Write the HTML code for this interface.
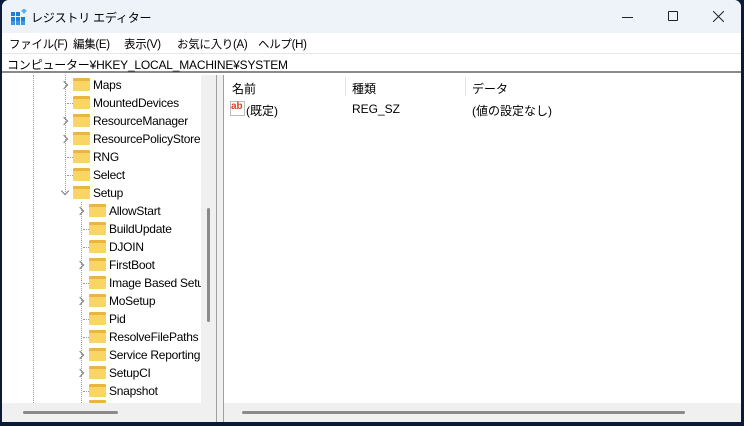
<!DOCTYPE html>
<html><head><meta charset="utf-8"><style>
*{margin:0;padding:0;box-sizing:border-box}
body{width:744px;height:426px;overflow:hidden;background:#0c1a3a;font-family:"Liberation Sans","Noto Sans CJK JP",sans-serif;font-size:12px;color:#000;position:relative}
.win{position:absolute;left:2px;top:0;width:739px;height:422px;background:#fff;border-radius:7px 7px 0 0;overflow:hidden}
.title{position:absolute;left:0;top:0;width:100%;height:33px;background:#eef3f9}
.menu{position:absolute;top:33px;left:0;width:100%;height:20px;background:#fff;font-size:11.5px;letter-spacing:-0.3px}
.menu span{position:absolute;top:3px;white-space:nowrap}
.addr{position:absolute;top:53px;left:0;width:100%;height:20px;background:#fff;border-top:1px solid #e6e6e6;border-bottom:2px solid #8a8a8a}
.t{position:absolute;white-space:nowrap}
.tree{position:absolute;left:0;top:75px;width:199px;height:328px;background:#fff;overflow:hidden}
.vs{position:absolute;left:199px;top:75px;width:15px;height:328px;background:#f0f0f0}
.hs{position:absolute;left:0;top:403px;width:214px;height:19px;background:#f0f0f0}
.split{position:absolute;left:214px;top:75px;width:8px;height:347px;background:#f0f0f0;border-left:1px solid #a0a0a0;border-right:1px solid #a0a0a0}
.right{position:absolute;left:222px;top:75px;width:517px;height:347px;background:#fff}
.f{position:absolute;width:17px;height:13px;background:#f8d564;border-top:3px solid #eab63f;border-radius:1px}
.chev{position:absolute;width:6px;height:6px;border-right:1.3px solid #777;border-bottom:1.3px solid #777}
.dv{position:absolute;border-left:1px dotted #999;width:0}
.dh{position:absolute;border-top:1px dotted #999;height:0}
.it{letter-spacing:-0.25px}
</style></head><body>
<div class="win">
<div class="title">
<svg style="position:absolute;left:9px;top:9px" width="16" height="16" viewBox="0 0 16 16"><g fill="#1f7fd6"><rect x="0" y="3" width="4" height="4"/><rect x="5" y="3" width="4" height="4"/><rect x="0" y="8" width="4" height="4"/><rect x="5" y="8" width="4" height="4"/><rect x="10" y="8" width="4" height="4"/><rect x="0" y="12" width="4" height="4" fill="#3a9ae8"/><rect x="5" y="12" width="4" height="4" fill="#3a9ae8"/><rect x="10" y="12" width="4" height="4" fill="#3a9ae8"/></g><rect x="11" y="0" width="4" height="4" fill="#5ab0f0" transform="rotate(45 13 2)"/></svg>
<span class="t" style="left:29px;top:9px;font-size:12px;letter-spacing:-0.2px">レジストリ エディター</span>
<div style="position:absolute;left:620px;top:17px;width:11px;height:1px;background:#222"></div>
<div style="position:absolute;left:666px;top:11px;width:10px;height:10px;border:1px solid #222;border-radius:1px"></div>
<svg style="position:absolute;left:711px;top:11px" width="11" height="11"><path d="M0 0L11 11M11 0L0 11" stroke="#222" stroke-width="1"/></svg>
</div>
<div class="menu"><span style="left:7px">ファイル(F)</span><span style="left:71px">編集(E)</span><span style="left:122px">表示(V)</span><span style="left:175px">お気に入り(A)</span><span style="left:256px">ヘルプ(H)</span></div>
<div class="addr"><span class="t" style="left:5px;top:2px;letter-spacing:-0.2px">コンピューター¥HKEY_LOCAL_MACHINE¥SYSTEM</span></div>
<div class="tree">
<div class="dv" style="left:31px;top:0;height:328px"></div>
<div class="dv" style="left:63px;top:0;height:117px"></div>
<div class="dv" style="left:79px;top:127px;height:201px"></div>
</div>
<div id="items"></div>
<div class="vs"><div style="position:absolute;left:6px;top:133px;width:3px;height:114px;background:#8a8a8a;border-radius:2px"></div></div>
<div class="hs"><div style="position:absolute;left:21px;top:8px;width:95px;height:3px;background:#8a8a8a;border-radius:2px"></div></div>
<div class="split"></div>
<div class="right">
<div style="position:absolute;left:121px;top:2px;width:1px;height:19px;background:#e5e5e5"></div>
<div style="position:absolute;left:241px;top:2px;width:1px;height:19px;background:#e5e5e5"></div>
<span class="t" style="left:8px;top:5px">名前</span><span class="t" style="left:128px;top:5px">種類</span><span class="t" style="left:248px;top:5px">データ</span>
<div style="position:absolute;left:6px;top:26px;width:15px;height:15px;border:1px solid #bbb;background:#fff"><span style="position:absolute;left:0;top:-1px;font-size:10px;font-weight:bold;color:#d9441a">ab</span></div>
<span class="t" style="left:22px;top:27px">(既定)</span><span class="t" style="left:128px;top:27px">REG_SZ</span><span class="t" style="left:248px;top:27px">(値の設定なし)</span>
<div style="position:absolute;left:0;top:328px;width:517px;height:19px;background:#f0f0f0"><div style="position:absolute;left:18px;top:8px;width:443px;height:3px;background:#8a8a8a;border-radius:2px"></div></div>
</div>
</div>
<script>
var L=[[1,1,"Maps"],[1,0,"MountedDevices"],[1,1,"ResourceManager"],[1,1,"ResourcePolicyStore"],[1,0,"RNG"],[1,0,"Select"],[1,2,"Setup"],[2,1,"AllowStart"],[2,0,"BuildUpdate"],[2,0,"DJOIN"],[2,1,"FirstBoot"],[2,0,"Image Based Setu"],[2,1,"MoSetup"],[2,0,"Pid"],[2,0,"ResolveFilePaths"],[2,1,"Service Reporting"],[2,1,"SetupCI"],[2,0,"Snapshot"]];
var h="";
L.forEach(function(e,i){var y=76+i*18,x=e[0]==1?69:85;var c=y+9;
if(e[1]==1)h+='<div class="chev" style="left:'+(x-12)+'px;top:'+(c-3)+'px;transform:rotate(-45deg)"></div>';
else if(e[1]==2)h+='<div class="chev" style="left:'+(x-11)+'px;top:'+(c-5)+'px;transform:rotate(45deg)"></div>';
else h+='<div class="dh" style="left:'+(x-6)+'px;top:'+c+'px;width:6px"></div>';
h+='<div class="f" style="left:'+x+'px;top:'+(y+2)+'px"></div><span class="t it" style="left:'+(x+20)+'px;top:'+(y+2)+'px">'+e[2]+'</span>';});
h+='<div class="f" style="left:85px;top:400px;height:3px"></div>';
var d=document.createElement('div');d.style.cssText='position:absolute;left:2px;top:0;width:197px;height:403px;overflow:hidden';d.innerHTML=h;document.querySelector('.win').insertBefore(d,document.querySelector('.vs'));
</script>
</body></html>
